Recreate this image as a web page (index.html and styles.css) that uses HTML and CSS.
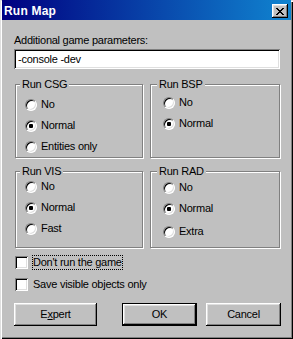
FILE: index.html
```html
<!DOCTYPE html>
<html>
<head>
<meta charset="utf-8">
<title>Run Map</title>
<link rel="stylesheet" href="styles.css">
</head>
<body>
<div class="window">
  <div class="titlebar">
    <span class="title">Run Map</span>
    <button class="close" aria-label="Close"><svg width="8" height="7" viewBox="0 0 8 7"><path d="M0 0h2v1H0zM6 0h2v1H6zM1 1h2v1H1zM5 1h2v1H5zM2 2h4v1H2zM3 3h2v1H3zM2 4h4v1H2zM1 5h2v1H1zM5 5h2v1H5zM0 6h2v1H0zM6 6h2v1H6z" fill="#000"/></svg></button>
  </div>
  <div class="content">
    <div class="field-label">Additional game parameters:</div>
    <div class="textbox">-console -dev</div>
    <div class="groups">
      <fieldset class="group">
        <legend class="legend legend--left">Run CSG</legend>
        <div class="options options--csg">
          <div class="option"><span class="radio"></span><span>No</span></div>
          <div class="option"><span class="radio radio--on"></span><span>Normal</span></div>
          <div class="option"><span class="radio"></span><span>Entities only</span></div>
        </div>
      </fieldset>
      <fieldset class="group">
        <legend class="legend legend--right">Run BSP</legend>
        <div class="options options--bsp">
          <div class="option"><span class="radio"></span><span>No</span></div>
          <div class="option"><span class="radio radio--on"></span><span>Normal</span></div>
        </div>
      </fieldset>
      <fieldset class="group">
        <legend class="legend legend--left">Run VIS</legend>
        <div class="options options--vis">
          <div class="option"><span class="radio"></span><span>No</span></div>
          <div class="option"><span class="radio radio--on"></span><span>Normal</span></div>
          <div class="option"><span class="radio"></span><span>Fast</span></div>
        </div>
      </fieldset>
      <fieldset class="group">
        <legend class="legend legend--right">Run RAD</legend>
        <div class="options options--rad">
          <div class="option"><span class="radio"></span><span>No</span></div>
          <div class="option"><span class="radio radio--on"></span><span>Normal</span></div>
          <div class="option option--low"><span class="radio"></span><span>Extra</span></div>
        </div>
      </fieldset>
    </div>
    <div class="checks">
      <div class="check"><span class="checkbox"></span><span class="check-label check-label--focus">Don't run the game</span></div>
      <div class="check"><span class="checkbox"></span><span class="check-label">Save visible objects only</span></div>
    </div>
    <div class="buttons">
      <button class="btn btn--expert">E<u>x</u>pert</button>
      <button class="btn btn--ok">OK</button>
      <button class="btn btn--cancel">Cancel</button>
    </div>
  </div>
</div>
</body>
</html>
```

FILE: styles.css
```css
* { box-sizing: border-box; }
html, body { margin: 0; padding: 0; }
body {
  width: 293px;
  height: 339px;
  overflow: hidden;
  background: #c0c0c0;
  font-family: "Liberation Sans", Arial, sans-serif;
  font-size: 11px;
  line-height: 13px;
  letter-spacing: -0.25px;
  color: #000;
}
.window {
  width: 293px;
  height: 339px;
  background: #c0c0c0;
  padding: 0 2px 2px 2px;
  box-shadow: inset 1px 1px #dfdfdf, inset 2px 2px #fff, inset -1px -1px #000, inset -2px -2px #808080;
  display: flex;
  flex-direction: column;
}
.titlebar {
  height: 20px;
  flex: none;
  display: flex;
  align-items: center;
  padding: 0 3px 0 2px;
  background: linear-gradient(90deg, #000080, #1084d0);
}
.title {
  flex: 1;
  color: #fff;
  font-weight: bold;
  font-size: 12px;
  letter-spacing: 0.2px;
  line-height: 14px;
  padding-top: 2px;
}
.close {
  width: 16px;
  height: 14px;
  margin-top: 2px;
  padding: 0;
  border: 0;
  background: #c0c0c0;
  display: flex;
  align-items: center;
  justify-content: center;
  box-shadow: inset -1px -1px #000, inset 1px 1px #fff, inset -2px -2px #808080, inset 2px 2px #dfdfdf;
}
.close svg { display: block; }
.content {
  padding: 14px 10px 0 12px;
}
.field-label { height: 13px; }
.textbox {
  margin-top: 2px;
  width: 266px;
  height: 20px;
  line-height: 20px;
  padding: 0 3px 0 4px;
  background: #fff;
  box-shadow: inset 1px 1px #808080, inset -1px -1px #fff, inset 2px 2px #000, inset -2px -2px #dfdfdf;
}
.groups {
  margin: 9px 0 0 1px;
  display: grid;
  grid-template-columns: 128px 130px;
  grid-template-rows: 80px 83px;
  column-gap: 7px;
  row-gap: 7px;
}
.group {
  margin: 0;
  padding: 0;
  min-width: 0;
  border: 1px solid #808080;
  box-shadow: inset 1px 1px #fff, 1px 1px #fff;
}
.legend {
  padding: 0 2px;
  line-height: 13px;
  background: #c0c0c0;
}
.legend--left { margin-left: 4px; }
.legend--right { margin-left: 6px; }
.options {
  display: flex;
  flex-direction: column;
}
.options--csg { padding: 3px 0 0 9px; }
.options--bsp { padding: 1px 0 0 12px; }
.options--vis { margin-top: -2px; padding-left: 9px; }
.options--rad { margin-top: -1px; padding-left: 12px; }
.option {
  height: 21px;
  display: flex;
  align-items: center;
  gap: 4px;
}
.option--low { margin-top: 2px; }
.radio {
  position: relative;
  flex: none;
  width: 12px;
  height: 12px;
  border-radius: 50%;
  background: #fff;
  border: 1px solid;
  border-color: #808080 #fff #fff #808080;
  box-shadow: inset 1px 1px #000, inset -1px -1px #dfdfdf;
}
.radio--on::after {
  content: "";
  position: absolute;
  left: 3px;
  top: 3px;
  width: 4px;
  height: 4px;
  border-radius: 1px;
  background: #000;
}
.checks {
  margin-top: 7px;
  padding-left: 1px;
  display: flex;
  flex-direction: column;
  gap: 7px;
}
.check {
  height: 15px;
  display: flex;
  align-items: center;
  gap: 4px;
}
.checkbox {
  flex: none;
  width: 13px;
  height: 13px;
  background: #fff;
  box-shadow: inset 1px 1px #808080, inset -1px -1px #fff, inset 2px 2px #000, inset -2px -2px #dfdfdf;
}
.check-label {
  border: 1px dotted transparent;
  line-height: 13px;
}
.check-label--focus { border-color: #000; }
.buttons {
  margin-top: 11px;
  display: flex;
}
.btn {
  height: 23px;
  padding: 0;
  border: 0;
  background: #c0c0c0;
  font: inherit;
  letter-spacing: inherit;
  color: #000;
  box-shadow: inset -1px -1px #000, inset 1px 1px #fff, inset -2px -2px #808080, inset 2px 2px #dfdfdf;
}
.btn--expert { width: 83px; }
.btn--ok {
  width: 75px;
  margin-left: 25px;
  border: 1px solid #000;
}
.btn--cancel { width: 75px; margin-left: 9px; }
```
